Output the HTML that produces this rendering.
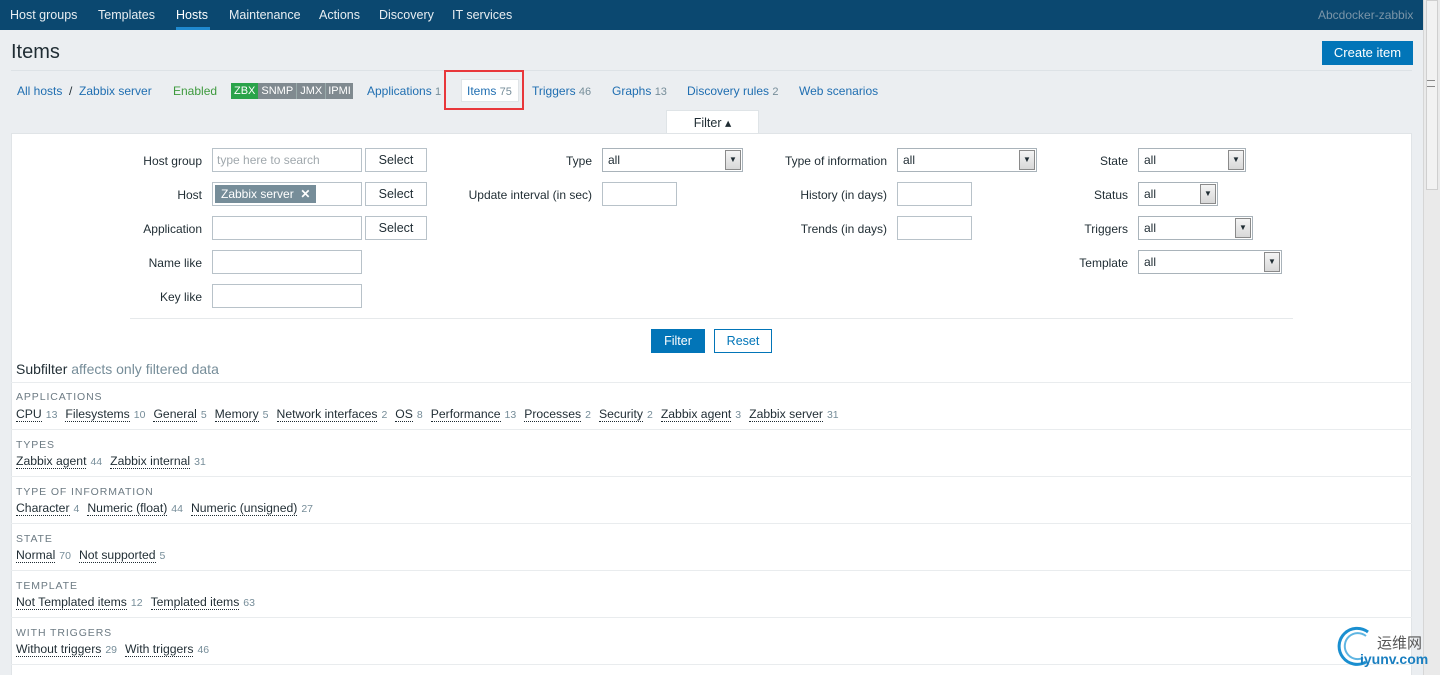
<!DOCTYPE html>
<html><head><meta charset="utf-8"><style>
*{box-sizing:border-box;margin:0;padding:0}
html,body{width:1440px;height:675px;overflow:hidden}
body{background:#ebeef1;font-family:"Liberation Sans",Arial,sans-serif;font-size:12px;color:#1f2c33;position:relative}
.abs{position:absolute}
.nav{left:0;top:0;width:1423px;height:30px;background:#0b4870}
.nav span{position:absolute;top:8px;color:#e8eef2;font-size:12.5px}
.sb{left:1423px;top:0;width:17px;height:675px;background:#eaeaea;border-left:1px solid #d6d6d6}
a,.lnk{color:#1f6eb1}
.lbl{position:absolute;text-align:right;width:200px}
.inp{position:absolute;height:24px;border:1px solid #b8c2c9;background:#fff}
.btn{position:absolute;height:24px;border:1px solid #b8c2c9;background:#fff;text-align:center;line-height:22px;font-size:12.5px}
.sel{position:absolute;height:24px;border:1px solid #a9b3ba;background:#fff;padding-left:5px;line-height:22px}
.sel i{position:absolute;right:1px;top:1px;width:16px;height:20px;background:linear-gradient(#f4f4f4,#d8d8d8);border:1px solid #8a8a8a;font-style:normal;font-size:8px;text-align:center;line-height:18px}
.hdr{position:absolute;left:16px;color:#6c7a83;font-size:10.5px;letter-spacing:.9px}
.row{position:absolute;left:16px;white-space:nowrap;font-size:12.2px}
.row u{text-decoration:none;border-bottom:1px dotted #1f2c33}
.row s{text-decoration:none;color:#768d99;font-size:10.5px;margin:0 8px 0 4px}
.hl{position:absolute;left:11px;width:1401px;height:1px;background:#e9ecee}
</style></head><body>
<div class="abs nav">
<span style="left:10px">Host groups</span><span style="left:98px">Templates</span><span style="left:176px;color:#fff">Hosts</span>
<div class="abs" style="left:176px;top:27px;width:34px;height:3px;background:#1f8ad0"></div>
<span style="left:229px">Maintenance</span><span style="left:319px">Actions</span><span style="left:379px">Discovery</span><span style="left:452px">IT services</span>
<span style="left:1318px;color:#7a95a8;font-size:12px">Abcdocker-zabbix</span>
</div>
<div class="abs sb"><div class="abs" style="left:2px;top:0;width:12px;height:190px;background:#f2f2f2;border:1px solid #cfcfcf"></div><div class="abs" style="left:3px;top:80px;width:8px;height:7px;border-top:1px solid #888;border-bottom:1px solid #888"></div></div>
<div class="abs" style="left:11px;top:41px;font-size:20px;color:#1f2c33">Items</div>
<div class="abs btn" style="left:1322px;top:41px;width:91px;border-color:#0275b8;background:#0275b8;color:#fff;font-size:13px">Create item</div>
<div class="abs" style="left:11px;top:70px;width:1401px;height:1px;background:#dde2e6"></div>
<div class="abs" style="left:17px;top:84px;white-space:nowrap">
<span class="lnk">All hosts</span>&nbsp; / &nbsp;<span class="lnk">Zabbix server</span></div>
<span class="abs" style="left:173px;top:84px;color:#3e9a3e">Enabled</span>
<div class="abs" style="left:231px;top:83px;height:16px;font-size:11px;line-height:16px;color:#fff;white-space:nowrap">
<span style="background:#2aa34a;padding:0 3px;display:inline-block">ZBX</span><span style="background:#808a90;padding:0 3px;display:inline-block">SNMP</span><span style="background:#808a90;padding:0 3px;display:inline-block;border-left:1px solid #9aa">JMX</span><span style="background:#808a90;padding:0 2px;display:inline-block;border-left:1px solid #9aa">IPMI</span></div>
<span class="abs lnk" style="left:367px;top:84px">Applications <span style="color:#768d99;font-size:11px">1</span></span>
<div class="abs" style="left:444px;top:70px;width:80px;height:40px;border:2px solid #e8373b"></div>
<div class="abs" style="left:461px;top:79px;width:58px;height:23px;background:#fff;border:1px solid #e0e4e7"></div>
<span class="abs lnk" style="left:467px;top:84px">Items <span style="color:#768d99;font-size:11px">75</span></span>
<span class="abs lnk" style="left:532px;top:84px">Triggers <span style="color:#768d99;font-size:11px">46</span></span>
<span class="abs lnk" style="left:612px;top:84px">Graphs <span style="color:#768d99;font-size:11px">13</span></span>
<span class="abs lnk" style="left:687px;top:84px">Discovery rules <span style="color:#768d99;font-size:11px">2</span></span>
<span class="abs lnk" style="left:799px;top:84px">Web scenarios</span>
<div class="abs" style="left:666px;top:110px;width:93px;height:24px;background:#fff;border:1px solid #dfe4e7;border-bottom:none;text-align:center;line-height:24px;font-size:12.5px">Filter ▴</div>
<div class="abs" style="left:11px;top:133px;width:1401px;height:560px;background:#fff;border:1px solid #e0e4e7"></div>
<div class="lbl" style="left:2px;top:154px">Host group</div>
<div class="lbl" style="left:2px;top:188px">Host</div>
<div class="lbl" style="left:2px;top:222px">Application</div>
<div class="lbl" style="left:2px;top:256px">Name like</div>
<div class="lbl" style="left:2px;top:290px">Key like</div>
<div class="inp" style="left:212px;top:148px;width:150px;color:#a0a8ad;padding:4px 4px">type here to search</div>
<div class="inp" style="left:212px;top:182px;width:150px"><span class="abs" style="left:2px;top:2px;height:18px;padding:0 6px;background:#768d99;color:#fff;line-height:18px;white-space:nowrap">Zabbix server&nbsp; <b>✕</b></span></div>
<div class="inp" style="left:212px;top:216px;width:150px"></div>
<div class="inp" style="left:212px;top:250px;width:150px"></div>
<div class="inp" style="left:212px;top:284px;width:150px"></div>
<div class="btn" style="left:365px;top:148px;width:62px">Select</div>
<div class="btn" style="left:365px;top:182px;width:62px">Select</div>
<div class="btn" style="left:365px;top:216px;width:62px">Select</div>
<div class="lbl" style="left:392px;top:154px">Type</div>
<div class="lbl" style="left:392px;top:188px">Update interval (in sec)</div>
<div class="sel" style="left:602px;top:148px;width:141px">all<i>▼</i></div>
<div class="inp" style="left:602px;top:182px;width:75px"></div>
<div class="lbl" style="left:687px;top:154px">Type of information</div>
<div class="lbl" style="left:687px;top:188px">History (in days)</div>
<div class="lbl" style="left:687px;top:222px">Trends (in days)</div>
<div class="sel" style="left:897px;top:148px;width:140px">all<i>▼</i></div>
<div class="inp" style="left:897px;top:182px;width:75px"></div>
<div class="inp" style="left:897px;top:216px;width:75px"></div>
<div class="lbl" style="left:928px;top:154px">State</div>
<div class="lbl" style="left:928px;top:188px">Status</div>
<div class="lbl" style="left:928px;top:222px">Triggers</div>
<div class="lbl" style="left:928px;top:256px">Template</div>
<div class="sel" style="left:1138px;top:148px;width:108px">all<i>▼</i></div>
<div class="sel" style="left:1138px;top:182px;width:80px">all<i>▼</i></div>
<div class="sel" style="left:1138px;top:216px;width:115px">all<i>▼</i></div>
<div class="sel" style="left:1138px;top:250px;width:144px">all<i>▼</i></div>
<div class="abs" style="left:130px;top:318px;width:1163px;height:1px;background:#e6e9eb"></div>
<div class="btn" style="left:651px;top:329px;width:54px;background:#0275b8;border-color:#0275b8;color:#fff">Filter</div>
<div class="btn" style="left:714px;top:329px;width:58px;border-color:#0275b8;color:#0275b8">Reset</div>
<div class="abs" style="left:16px;top:361px;font-size:14px">Subfilter <span style="color:#768d99">affects only filtered data</span></div>
<div class="hl" style="top:382px"></div>
<div class="hdr" style="top:391px">APPLICATIONS</div>
<div class="row" style="top:407px"><u>CPU</u><s>13</s><u>Filesystems</u><s>10</s><u>General</u><s>5</s><u>Memory</u><s>5</s><u>Network interfaces</u><s>2</s><u>OS</u><s>8</s><u>Performance</u><s>13</s><u>Processes</u><s>2</s><u>Security</u><s>2</s><u>Zabbix agent</u><s>3</s><u>Zabbix server</u><s>31</s></div>
<div class="hl" style="top:429px"></div>
<div class="hdr" style="top:439px">TYPES</div>
<div class="row" style="top:454px"><u>Zabbix agent</u><s>44</s><u>Zabbix internal</u><s>31</s></div>
<div class="hl" style="top:476px"></div>
<div class="hdr" style="top:486px">TYPE OF INFORMATION</div>
<div class="row" style="top:501px"><u>Character</u><s>4</s><u>Numeric (float)</u><s>44</s><u>Numeric (unsigned)</u><s>27</s></div>
<div class="hl" style="top:523px"></div>
<div class="hdr" style="top:533px">STATE</div>
<div class="row" style="top:548px"><u>Normal</u><s>70</s><u>Not supported</u><s>5</s></div>
<div class="hl" style="top:570px"></div>
<div class="hdr" style="top:580px">TEMPLATE</div>
<div class="row" style="top:595px"><u>Not Templated items</u><s>12</s><u>Templated items</u><s>63</s></div>
<div class="hl" style="top:617px"></div>
<div class="hdr" style="top:627px">WITH TRIGGERS</div>
<div class="row" style="top:642px"><u>Without triggers</u><s>29</s><u>With triggers</u><s>46</s></div>
<div class="hl" style="top:664px"></div>
<svg class="abs" style="left:1336px;top:626px" width="40" height="44"><path d="M32 6 A18 18 0 1 0 30 36" fill="none" stroke="#1a8fd0" stroke-width="3"/><path d="M30 10 A13 13 0 1 0 27 32" fill="none" stroke="#5fb5e2" stroke-width="2"/></svg>
<div class="abs" style="left:1377px;top:632px;font-size:15px;color:#555;font-family:'Liberation Sans','Noto Sans CJK SC',sans-serif">运维网</div>
<div class="abs" style="left:1360px;top:651px;font-size:14px;color:#1a7fc0;font-weight:bold">iyunv.com</div>
</body></html>
